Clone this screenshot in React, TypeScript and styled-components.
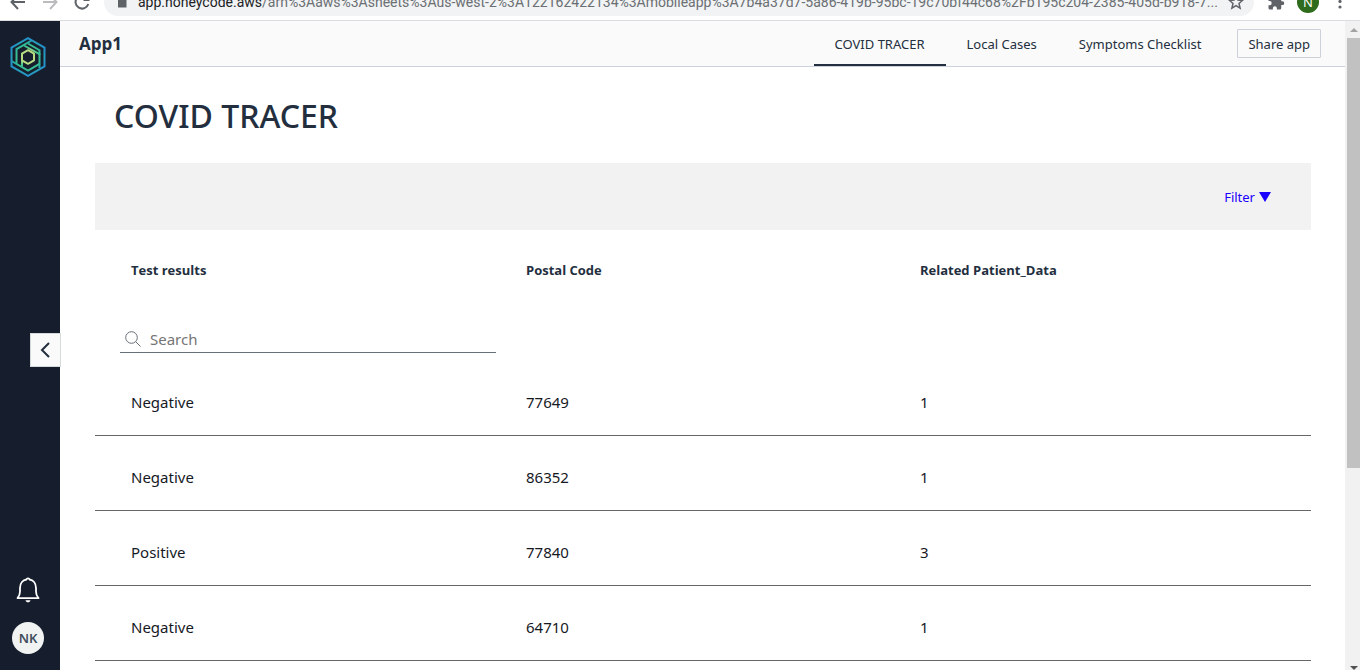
import React from "react";
import styled, { createGlobalStyle } from "styled-components";

const Global = createGlobalStyle`
  * { box-sizing: border-box; }
  body { margin: 0; background: #fff; color: #232f3e; font-family: "Noto Sans", "Open Sans", sans-serif; font-size: 15px; }
  button, input { font: inherit; color: inherit; margin: 0; }
`;

const Screen = styled.div`
  display: flex;
  flex-direction: column;
  height: 100vh;
  overflow: hidden;
`;

/* Browser toolbar, scrolled partly out of view at the top */
const Toolbar = styled.div`
  display: flex;
  align-items: flex-end;
  flex: none;
  height: 21px;
  padding: 0 4px 4px 2px;
  overflow: hidden;
  border-bottom: 1px solid #dadce0;
  color: #5f6368;
`;
const ToolButton = styled.button<{ $faded?: boolean }>`
  display: grid;
  place-items: center;
  flex: none;
  width: 32px;
  height: 28px;
  padding: 0;
  border: 0;
  background: none;
  color: ${(p) => (p.$faded ? "#babcbe" : "#5f6368")};
`;
const Address = styled.div`
  display: flex;
  align-items: center;
  flex: 1;
  min-width: 0;
  height: 28px;
  margin: 0 6px;
  padding: 0 2px 0 12px;
  border-radius: 14px;
  background: #f1f3f4;
`;
const Url = styled.span`
  flex: 1;
  min-width: 0;
  margin-left: 10px;
  font-family: Roboto, "Open Sans", sans-serif;
  font-size: 14px;
  line-height: 20px;
  white-space: nowrap;
  color: #6b6f73;
`;
const Host = styled.span`
  color: #202124;
`;
const Profile = styled.button`
  flex: none;
  width: 22px;
  height: 22px;
  margin: 0 5px 3px;
  padding: 0;
  border: 0;
  border-radius: 50%;
  background: #2f6b1c;
  color: #fff;
  font-size: 13px;
  line-height: 22px;
`;

const Body = styled.div`
  display: flex;
  flex: 1;
  min-height: 0;
`;

const Sidebar = styled.aside`
  position: relative;
  display: flex;
  flex-direction: column;
  align-items: center;
  flex: none;
  width: 60px;
  padding: 15px 4px 16px 0;
  background: #161e2d;
`;
const BellButton = styled.button`
  display: grid;
  margin-top: auto;
  margin-bottom: 18px;
  padding: 0;
  border: 0;
  background: none;
`;
const Avatar = styled.button`
  width: 32px;
  height: 32px;
  padding: 0;
  border: 0;
  border-radius: 50%;
  background: #f1f3f3;
  color: #414d5c;
  font-size: 13px;
  font-weight: 600;
`;
const Collapse = styled.button`
  position: absolute;
  right: -1px;
  top: 312px;
  display: grid;
  place-items: center;
  width: 31px;
  height: 34px;
  padding: 0 2px 0 0;
  border: 1px solid #d5dbdb;
  background: #fafafa;
`;

const Main = styled.div`
  flex: 1;
  min-width: 0;
  overflow: hidden;
`;
const Header = styled.header`
  display: flex;
  align-items: center;
  height: 46px;
  padding: 0 24px 0 19px;
  border-bottom: 1px solid #ccd1dc;
  background: #fafafa;
`;
const AppName = styled.span`
  margin-right: auto;
  font-family: "Open Sans", sans-serif;
  font-size: 17px;
  font-weight: 700;
`;
const Nav = styled.nav`
  display: flex;
  align-self: stretch;
  margin-right: 15px;
`;
const Tab = styled.a<{ $active?: boolean }>`
  padding: 0 21px;
  border-bottom: 2px solid ${(p) => (p.$active ? "#232f3e" : "transparent")};
  color: inherit;
  font-size: 13px;
  line-height: 46px;
  text-decoration: none;
  white-space: nowrap;
`;
const Share = styled.button`
  height: 29px;
  padding: 0 10px;
  border: 1px solid #ccd1d9;
  border-radius: 1px;
  background: #fafafa;
  font-size: 13px;
`;

const Content = styled.main`
  padding: 0 34px 0 35px;
`;
const Title = styled.h1`
  margin: 0;
  padding: 27px 19px 25px;
  font-size: 32px;
  line-height: 44px;
  font-weight: 500;
`;
const FilterBar = styled.div`
  display: flex;
  align-items: center;
  justify-content: flex-end;
  height: 67px;
  padding-right: 40px;
  background: #f2f2f2;
`;
const Filter = styled.button`
  display: flex;
  align-items: center;
  gap: 4px;
  padding: 0;
  border: 0;
  background: none;
  color: #1a00ff;
  font-size: 13px;
`;

const Table = styled.table`
  width: 100%;
  table-layout: fixed;
  border-collapse: separate;
  border-spacing: 0;
`;
const Col = styled.col<{ $share: string }>`
  width: ${(p) => p.$share};
`;
const HeadCell = styled.th`
  height: 81px;
  padding: 0 20px 2px;
  text-align: left;
  font-family: "Open Sans", sans-serif;
  font-size: 13px;
  font-weight: 700;
  &:first-child { padding-left: 36px; }
`;
const SearchCell = styled.td`
  height: 50px;
  padding: 0 10px 0 25px;
  vertical-align: top;
`;
const SearchBox = styled.label`
  display: flex;
  align-items: center;
  gap: 9px;
  height: 42px;
  padding: 14px 0 0 5px;
  border-bottom: 1px solid #687078;
`;
const SearchInput = styled.input`
  flex: 1;
  min-width: 0;
  padding: 0;
  border: 0;
  outline: 0;
  background: none;
  &::placeholder { color: #757575; opacity: 1; }
`;
const Cell = styled.td`
  height: 75px;
  padding: 8px 20px 0;
  border-bottom: 1px solid #666;
  color: #16191f;
  &:first-child { padding-left: 36px; }
`;

const Scrollbar = styled.div`
  display: flex;
  flex-direction: column;
  flex: none;
  width: 15px;
  padding-left: 2px;
  background: #f1f1f1;
`;
const ScrollArrow = styled.button<{ $size: number }>`
  display: grid;
  place-items: center;
  flex: none;
  height: ${(p) => p.$size}px;
  padding: 0;
  border: 0;
  background: none;
`;
const Track = styled.div`
  flex: 1;
`;
const Thumb = styled.div`
  height: 68.5%;
  background: #c1c1c1;
`;

const rows = [
  ["Negative", "77649", "1"],
  ["Negative", "86352", "1"],
  ["Positive", "77840", "3"],
  ["Negative", "64710", "1"],
];

const Logo = () => (
  <svg width="36" height="42" viewBox="0 0 36 42" fill="none" strokeWidth="2" aria-label="Honeycode">
    <defs>
      <radialGradient id="hc" gradientUnits="userSpaceOnUse" cx="18" cy="21" r="20">
        <stop offset="0.34" stopColor="#b9dc83" />
        <stop offset="0.48" stopColor="#45c48c" />
        <stop offset="0.7" stopColor="#2bb59c" />
        <stop offset="0.88" stopColor="#2491c9" />
      </radialGradient>
    </defs>
    <g stroke="url(#hc)">
      <path d="M18 2.200 34.500 11.600V30.400L18 39.800 1.500 30.400V11.600Z" />
      <path d="M18 14.200 24 17.600V24.400L18 27.800 12 24.400V17.600Z" />
      <path d="M21.500 4.500 6.500 13.200V27.500" />
      <path d="M14 9.500 29.500 18.200V32" />
      <path d="M18 7.500 29.500 14.200V19" />
      <path d="M1.500 25 18 34.500 29.500 27.800" />
      <path d="M12 17.600V30.500" />
    </g>
  </svg>
);

export default function App() {
  return (
    <Screen>
      <Global />
      <Toolbar>
        <ToolButton aria-label="Back">
          <svg width="16" height="16" viewBox="0 0 16 16" fill="none" stroke="currentColor" strokeWidth="2"><path d="M15 8H2M8 1 1.500 8 8 15" /></svg>
        </ToolButton>
        <ToolButton $faded aria-label="Forward">
          <svg width="16" height="16" viewBox="0 0 16 16" fill="none" stroke="currentColor" strokeWidth="2"><path d="M1 8H14M8 1 14.500 8 8 15" /></svg>
        </ToolButton>
        <ToolButton aria-label="Reload">
          <svg width="16" height="16" viewBox="0 0 16 16" fill="none" stroke="currentColor" strokeWidth="2"><path d="M13.500 4.500A6.500 6.500 0 1 0 14.300 10M14.500 1V6H9.500" /></svg>
        </ToolButton>
        <Address>
          <svg width="12" height="14" viewBox="0 0 12 14" fill="#5f6368"><path d="M2 5h8.500v7.500H2z" /><path d="M3.500 5V3.500a2.500 2.500 0 0 1 5 0V5" fill="none" stroke="#5f6368" strokeWidth="1.500" /></svg>
          <Url>
            <Host>app.honeycode.aws</Host>/arn%3Aaws%3Asheets%3Aus-west-2%3A122162422134%3Amobileapp%3A7b4a37d7-5a86-419b-95bc-19c70bf44c68%2Fb195c204-2385-405d-b918-7...
          </Url>
          <ToolButton aria-label="Bookmark">
            <svg width="16" height="16" viewBox="0 0 16 16" fill="none" stroke="currentColor" strokeWidth="1.500"><path d="M8 1.500 9.900 6l4.600.4-3.500 3.100 1.100 4.700L8 11.700l-4.100 2.500L5 9.500 1.500 6.400 6.100 6Z" /></svg>
          </ToolButton>
        </Address>
        <ToolButton aria-label="Extensions">
          <svg width="18" height="18" viewBox="0 0 24 24" fill="currentColor"><path d="M20.500 11H19V7a2 2 0 0 0-2-2h-4V3.500a2.500 2.500 0 0 0-5 0V5H4a2 2 0 0 0-2 2v3.800h1.500a2.700 2.700 0 0 1 0 5.400H2V20a2 2 0 0 0 2 2h3.800v-1.500a2.700 2.700 0 0 1 5.400 0V22H17a2 2 0 0 0 2-2v-4h1.500a2.500 2.500 0 0 0 0-5z" /></svg>
        </ToolButton>
        <Profile>N</Profile>
        <ToolButton aria-label="Menu">
          <svg width="4" height="16" viewBox="0 0 4 16" fill="currentColor"><circle cx="2" cy="2" r="1.600" /><circle cx="2" cy="7.500" r="1.600" /><circle cx="2" cy="13" r="1.600" /></svg>
        </ToolButton>
      </Toolbar>
      <Body>
        <Sidebar>
          <Logo />
          <BellButton aria-label="Notifications">
            <svg width="24" height="28" viewBox="0 0 24 28" fill="none" stroke="#fff" strokeWidth="1.800" strokeLinejoin="round"><path d="M1.500 22.200H22.500C20.500 20 20 18.500 20 15.500V12C20 7 17 4 13.500 3.500 13.300 2 10.700 2 10.500 3.500 7 4 4 7 4 12V15.500C4 18.500 3.500 20 1.500 22.200Z" /><path d="M9.500 24.300H14.500C13.800 27 10.200 27 9.500 24.300Z" fill="#fff" stroke="none" /></svg>
          </BellButton>
          <Avatar>NK</Avatar>
          <Collapse aria-label="Collapse sidebar">
            <svg width="10" height="16" viewBox="0 0 10 16" fill="none" stroke="#232f3e" strokeWidth="2"><path d="M9 1 2 8l7 7" /></svg>
          </Collapse>
        </Sidebar>
        <Main>
          <Header>
            <AppName>App1</AppName>
            <Nav>
              <Tab href="#tracer" $active>COVID TRACER</Tab>
              <Tab href="#cases">Local Cases</Tab>
              <Tab href="#symptoms">Symptoms Checklist</Tab>
            </Nav>
            <Share>Share app</Share>
          </Header>
          <Content>
            <Title>COVID TRACER</Title>
            <FilterBar>
              <Filter>
                Filter
                <svg width="12" height="10" viewBox="0 0 12 10" fill="currentColor"><path d="M0 0H12L6 10Z" /></svg>
              </Filter>
            </FilterBar>
            <Table>
              <colgroup>
                <Col $share="33.8%" />
                <Col $share="32.4%" />
                <Col $share="33.8%" />
              </colgroup>
              <thead>
                <tr>
                  <HeadCell>Test results</HeadCell>
                  <HeadCell>Postal Code</HeadCell>
                  <HeadCell>Related Patient_Data</HeadCell>
                </tr>
              </thead>
              <tbody>
                <tr>
                  <SearchCell>
                    <SearchBox>
                      <svg width="16" height="16" viewBox="0 0 16 16" fill="none" stroke="#687078" strokeWidth="1"><circle cx="6.500" cy="6.500" r="5.800" /><path d="M10.700 10.700 15.500 15.500" /></svg>
                      <SearchInput type="search" placeholder="Search" aria-label="Search" />
                    </SearchBox>
                  </SearchCell>
                  <SearchCell colSpan={2} />
                </tr>
                {rows.map((row, i) => (
                  <tr key={i}>
                    {row.map((value, j) => (
                      <Cell key={j}>{value}</Cell>
                    ))}
                  </tr>
                ))}
              </tbody>
            </Table>
          </Content>
        </Main>
        <Scrollbar>
          <ScrollArrow $size={17} aria-label="Scroll up">
            <svg width="8" height="4" viewBox="0 0 8 4" fill="#a3a3a3"><path d="M0 4 4 0 8 4Z" /></svg>
          </ScrollArrow>
          <Track>
            <Thumb />
          </Track>
          <ScrollArrow $size={4} aria-label="Scroll down">
            <svg width="8" height="4" viewBox="0 0 8 4" fill="#505050"><path d="M0 0 4 4 8 0Z" /></svg>
          </ScrollArrow>
        </Scrollbar>
      </Body>
    </Screen>
  );
}
